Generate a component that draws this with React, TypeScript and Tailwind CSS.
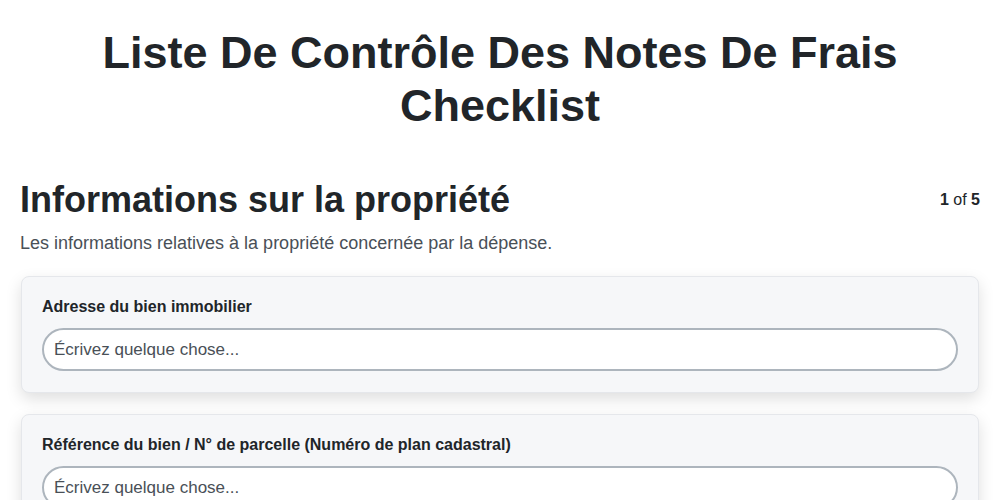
import React from 'react';

const FIELDS = [
  { id: 'adresse', label: 'Adresse du bien immobilier' },
  { id: 'reference', label: 'Référence du bien / N° de parcelle (Numéro de plan cadastral)' },
  { id: 'type', label: 'Type de bien' },
];

function Field({ label }: { label: string }) {
  return (
    <div className="rounded-lg border border-[#e5e7eb] bg-[#f6f7f9] px-5 pt-5 pb-[21px] shadow-[0_6px_16px_rgba(0,0,0,0.13)]">
      <label className="mb-[11px] block text-[16px] font-bold leading-5 text-[#212529]">{label}</label>
      <input
        type="text"
        placeholder="Écrivez quelque chose..."
        className="block h-[43px] w-full rounded-full border-2 border-[#adb5bd] bg-white px-[10px] text-[17px] text-[#212529] outline-none placeholder:text-[#495057]"
      />
    </div>
  );
}

export default function App() {
  return (
    <div className="min-h-screen bg-white px-5 font-['Liberation_Sans',Arial,sans-serif] text-[#212529]">
      <h1 className="pt-[26px] text-center text-[45px] font-bold leading-[1.18]">
        Liste De Contrôle Des Notes De Frais Checklist
      </h1>
      <div className="mt-[46px] flex items-center justify-between">
        <h2 className="text-[36px] font-bold leading-[1.2]">Informations sur la propriété</h2>
        <div className="text-[16px]">
          <span className="font-bold">1</span> of <span className="font-bold">5</span>
        </div>
      </div>
      <p className="mt-[11px] text-[18px] leading-[22px] text-[#495057]">
        Les informations relatives à la propriété concernée par la dépense.
      </p>
      <div className="mt-[22px] flex flex-col gap-[21px] px-px">
        {FIELDS.map((f) => (
          <Field key={f.id} label={f.label} />
        ))}
      </div>
    </div>
  );
}
